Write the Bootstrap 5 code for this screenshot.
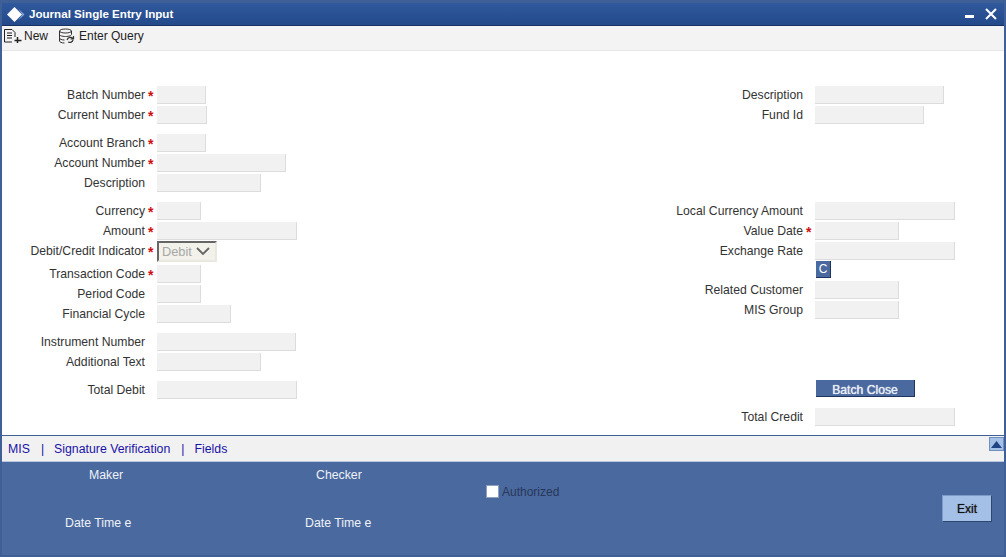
<!DOCTYPE html>
<html lang="en"><head><meta charset="utf-8"><title>Journal Single Entry Input</title>
<link rel="stylesheet" href="https://cdn.jsdelivr.net/npm/bootstrap@5.3.0/dist/css/bootstrap.min.css">
<style>
html,body{margin:0;height:557px;overflow:hidden;background:#fff}
body{font-family:"Liberation Sans",Arial,sans-serif;font-size:12.2px;color:#333}
.win{width:1006px;height:557px;border:solid #3f5f97;border-width:3px 2px 2px}
.titlebar{height:23px;background:linear-gradient(#30599d,#23498a);border-bottom:1px solid #16305f;color:#fff;font-weight:700;font-size:11.6px;padding-left:5px}
.title-text{margin-left:2px}
.win-ctl{padding-right:7px;gap:11px}
.toolbar{height:25px;background:#f3f3f3;border-bottom:1px solid #e6e6e6;padding:1px 0 0 2px;color:#222;font-size:12px}
.tool{gap:2px;height:18px;line-height:18px}
.tool+.tool{margin-left:10px}
.tool+.tool span{margin-left:1px}
.formarea{height:384px;padding-top:35px}
.colL{width:602px}.colR{width:400px}
.frow{height:20px}
.lbl{text-align:right;line-height:1;color:#333;padding-top:3px}
.colL .lbl{width:143px}
.colR .lbl{width:199px}
.req{color:#d01010;font-weight:700;width:12px;text-align:left;padding:3px 0 0 3px;font-size:14px;line-height:1}
.nreq{width:12px}
.fld{height:18px;background:#f1f1f1;border:0;border-bottom:1px solid #dcdcdc;border-right:1px solid #dcdcdc;padding:0;display:block}
.w44{width:44px}.w49{width:49px}.w50{width:50px}.w74{width:74px}.w104{width:104px}.w129{width:129px}.w139{width:139px}.w140{width:140px}.w84{width:84px}.w109{width:109px}
.gap8{margin-top:8px}.gap3{margin-top:3px}.gap76{margin-top:76px}.gap1n{margin-top:-1px}.gap59{margin-top:59px}
.sel{width:60px;height:21px;background:#f2f1ea;border:2px solid;border-color:#666 #e8e8e0 #e8e8e0 #666;color:#a8a8a8;font-size:12.8px;padding:0 3px;margin-top:-1px}
.chev{margin-left:auto;margin-right:2px}
.cbtn{width:15px;height:17px;margin-left:1px;background:#4a699e;color:#fff;border:0;border-right:1px solid #1f3560;border-bottom:1px solid #1f3560;padding:0;font-size:12px;line-height:16px;text-align:center}
.bbtn{width:99px;height:17px;margin-left:1px;background:#4a699e;color:#e8edf5;border:0;border-right:1px solid #1f3560;border-bottom:1px solid #1f3560;padding:2px 0 0;font-size:12.2px;line-height:16px;text-align:center;text-shadow:0 0 1px #fff}
.tabbar{height:27px;background:#f1f1f1;border-top:1px solid #3f5f97;border-bottom:1px solid #b9c8e0;padding:2px 0 0 6px;color:#1a12a8;font-size:12.3px}
.tabsep{margin:0 10px 0 11px}
.upbtn{position:absolute;right:0;top:1px;width:15px;height:14px;background:#a4c0e6;border:1px solid #6f8fbf;padding:0}
.footerx{height:93px;background:#4a699e;color:#eef2f8;font-size:12.3px}
.fcol{width:240px}
.mk1{padding-left:87px;padding-top:4px;height:52px}
.mk2{padding-left:63px}
.ck1{padding-left:74px;padding-top:4px;height:52px}
.ck2{padding-left:63px}
.authbox{width:13px;height:13px;background:#fff;border:1px solid #8da0c0;margin:0 3px 0 0;border-radius:0;display:block;appearance:none}
.auth{color:#28375a;margin-left:4px;margin-top:22px;height:15px;font-size:12px}
.exitb{width:50px;height:27px;background:#a4c0e6;color:#111;border:1px solid #7e9bc8;border-right-color:#2f466f;border-bottom-color:#2f466f;padding:0;font-size:12px;margin:33px 12px 0 0;text-shadow:0 0 1px #445}
</style></head>
<body>
<div class="win d-flex flex-column">
  <div class="titlebar d-flex align-items-center">
    <svg width="20" height="15" viewBox="0 0 20 15"><path d="M7.500 0 15 7.500 7.500 15 0 7.500z" fill="#fff"/><path d="M11 1.500 17.500 7.500 11 13.500 15.500 7.500z" fill="#8fb0dc"/></svg>
    <span class="title-text">Journal Single Entry Input</span>
    <div class="ms-auto d-flex align-items-center win-ctl">
      <svg width="9" height="10" viewBox="0 0 9 10"><rect x="0" y="6" width="9" height="3" fill="#fff"/></svg>
      <svg width="12" height="12" viewBox="0 0 12 12"><path d="M1 1l10 10M11 1 1 11" stroke="#fff" stroke-width="2"/></svg>
    </div>
  </div>
  <div class="toolbar d-flex align-items-start">
    <div class="tool d-flex align-items-center">
      <svg width="18" height="16" viewBox="0 0 18 16" fill="none" stroke="#222"><path d="M.5 14V1.500H8L11 4.500V9M.5 14H8"/><path d="M3 5h5M3 7.500h5M3 10h5"/><path d="M13.500 9v6M10.500 12.500h7" stroke-width="1.500"/></svg>
      <span>New</span>
    </div>
    <div class="tool d-flex align-items-center">
      <svg width="18" height="16" viewBox="0 0 18 16" fill="none" stroke="#333"><ellipse cx="7.500" cy="3" rx="6" ry="2"/><path d="M1.500 3v10c0 1 2 2 5 2M1.500 6.500c0 1 2.500 2 6 2s6-1 6-2V3M1.500 10c0 1 2 2 5 2"/><path d="M9 12c1-3 4-3.500 6-1.500M15.500 8v3h-3M15 12c-.5 2-2.500 3-5 2" stroke-width="1.200"/></svg>
      <span>Enter Query</span>
    </div>
  </div>
  <div class="formarea d-flex">
    <div class="colL">
      <div class="frow d-flex"><span class="lbl">Batch Number</span><span class="req">*</span><input class="fld w49" disabled></div>
      <div class="frow d-flex"><span class="lbl">Current Number</span><span class="req">*</span><input class="fld w50" disabled></div>
      <div class="frow d-flex gap8"><span class="lbl">Account Branch</span><span class="req">*</span><input class="fld w49" disabled></div>
      <div class="frow d-flex"><span class="lbl">Account Number</span><span class="req">*</span><input class="fld w129" disabled></div>
      <div class="frow d-flex"><span class="lbl">Description</span><span class="nreq"></span><input class="fld w104" disabled></div>
      <div class="frow d-flex gap8"><span class="lbl">Currency</span><span class="req">*</span><input class="fld w44" disabled></div>
      <div class="frow d-flex"><span class="lbl">Amount</span><span class="req">*</span><input class="fld w140" disabled></div>
      <div class="frow d-flex"><span class="lbl">Debit/Credit Indicator</span><span class="req">*</span><div class="sel d-flex align-items-center"><span>Debit</span><svg class="chev" width="14" height="9" viewBox="0 0 14 9"><path d="M1 1l6 6 6-6" fill="none" stroke="#666" stroke-width="1.800"/></svg></div></div>
      <div class="frow d-flex gap3"><span class="lbl">Transaction Code</span><span class="req">*</span><input class="fld w44" disabled></div>
      <div class="frow d-flex"><span class="lbl">Period Code</span><span class="nreq"></span><input class="fld w44" disabled></div>
      <div class="frow d-flex"><span class="lbl">Financial Cycle</span><span class="nreq"></span><input class="fld w74" disabled></div>
      <div class="frow d-flex gap8"><span class="lbl">Instrument Number</span><span class="nreq"></span><input class="fld w139" disabled></div>
      <div class="frow d-flex"><span class="lbl">Additional Text</span><span class="nreq"></span><input class="fld w104" disabled></div>
      <div class="frow d-flex gap8"><span class="lbl">Total Debit</span><span class="nreq"></span><input class="fld w140" disabled></div>
    </div>
    <div class="colR">
      <div class="frow d-flex"><span class="lbl">Description</span><span class="nreq"></span><input class="fld w129" disabled></div>
      <div class="frow d-flex"><span class="lbl">Fund Id</span><span class="nreq"></span><input class="fld w109" disabled></div>
      <div class="frow d-flex gap76"><span class="lbl">Local Currency Amount</span><span class="nreq"></span><input class="fld w140" disabled></div>
      <div class="frow d-flex"><span class="lbl">Value Date</span><span class="req">*</span><input class="fld w84" disabled></div>
      <div class="frow d-flex"><span class="lbl">Exchange Rate</span><span class="nreq"></span><input class="fld w140" disabled></div>
      <div class="frow d-flex gap1n"><span class="lbl"></span><span class="nreq"></span><button class="cbtn" type="button">C</button></div>
      <div class="frow d-flex"><span class="lbl">Related Customer</span><span class="nreq"></span><input class="fld w84" disabled></div>
      <div class="frow d-flex"><span class="lbl">MIS Group</span><span class="nreq"></span><input class="fld w84" disabled></div>
      <div class="frow d-flex gap59"><span class="lbl"></span><span class="nreq"></span><button class="bbtn" type="button">Batch Close</button></div>
      <div class="frow d-flex gap8"><span class="lbl">Total Credit</span><span class="nreq"></span><input class="fld w140" disabled></div>
    </div>
  </div>
  <div class="tabbar d-flex align-items-center position-relative">
    <span>MIS</span><span class="tabsep">|</span><span>Signature Verification</span><span class="tabsep">|</span><span>Fields</span>
    <button class="upbtn d-flex align-items-center justify-content-center" type="button" aria-label="Collapse"><svg width="11" height="7" viewBox="0 0 11 7"><path d="M5.500 0 11 7H0z" fill="#1f4483"/></svg></button>
  </div>
  <div class="footerx d-flex">
    <div class="fcol"><div class="mk1">Maker</div><div class="mk2">Date Time e</div></div>
    <div class="fcol"><div class="ck1">Checker</div><div class="ck2">Date Time e</div></div>
    <div class="auth d-flex align-items-center"><input type="checkbox" class="authbox" disabled aria-label="Authorized"><span>Authorized</span></div>
    <button class="exitb ms-auto" type="button">Exit</button>
  </div>
</div>
</body></html>
